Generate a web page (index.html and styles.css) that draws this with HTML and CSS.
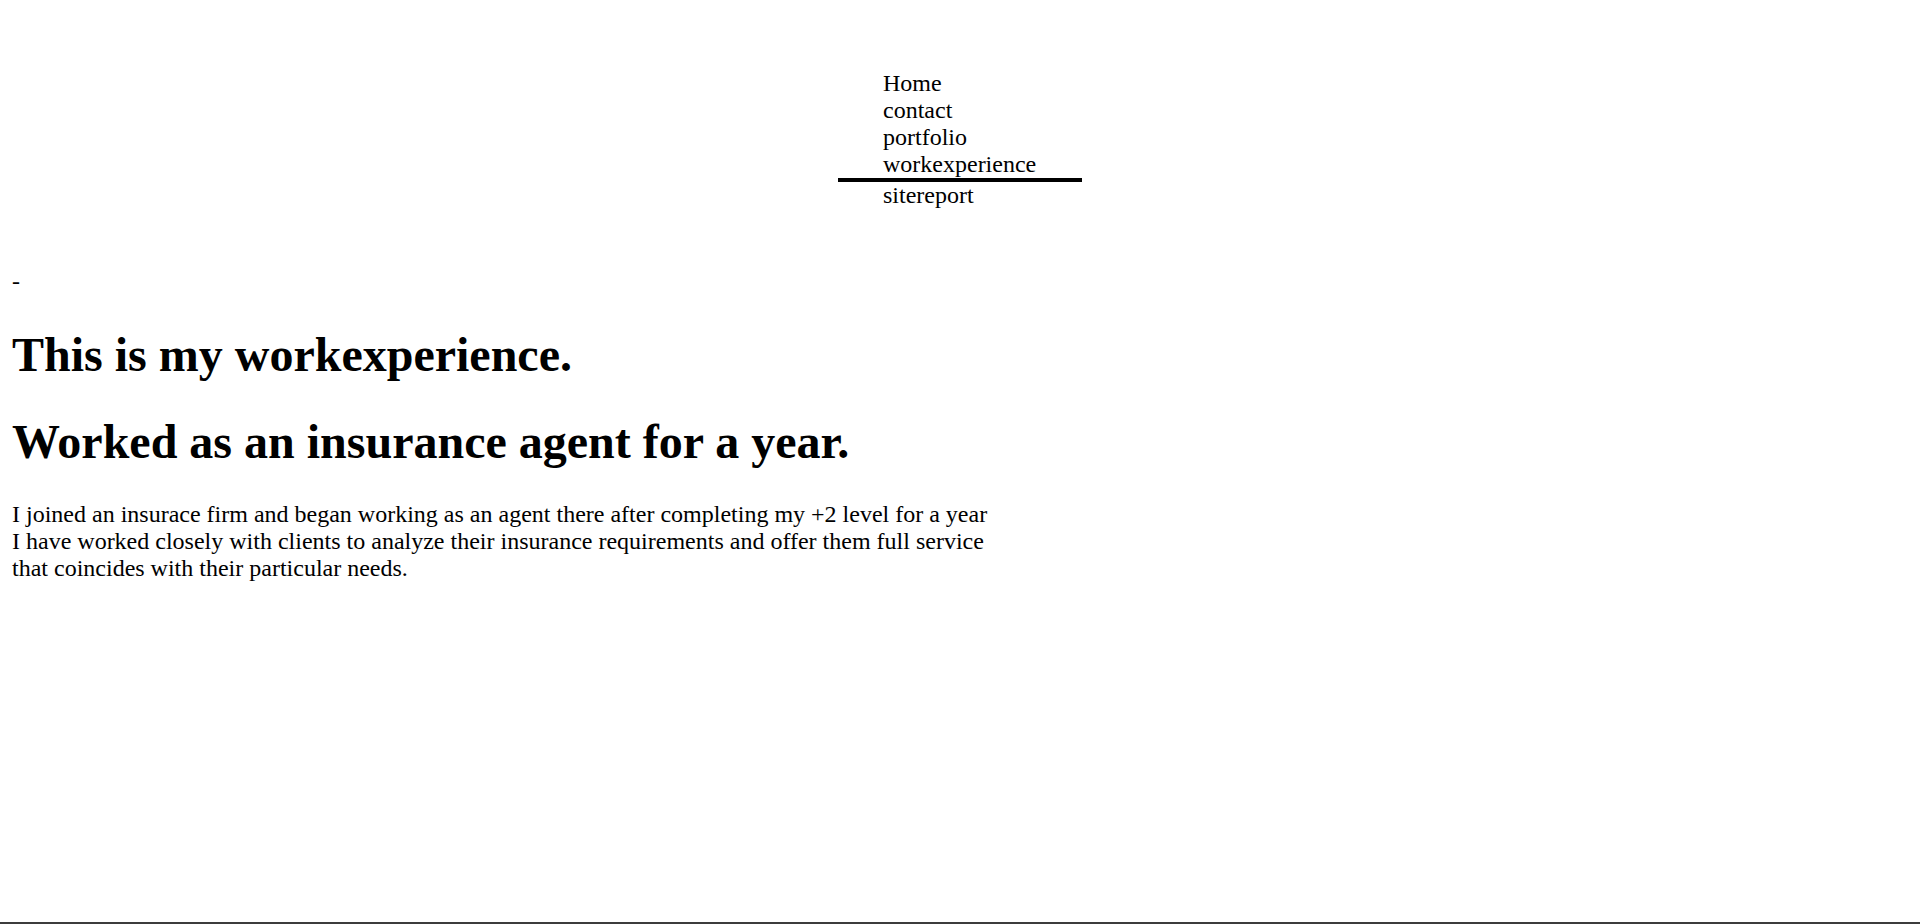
FILE: index.html
```html
<!DOCTYPE html>
<html lang="en">
<head>
<meta charset="utf-8">
<title>Work experience</title>
<link rel="stylesheet" href="styles.css">
</head>
<body>
<div class="page">
  <header class="site-header">
    <nav class="site-nav">
      <ul class="nav-list">
        <li class="nav-item"><a class="nav-link" href="#">Home</a></li>
        <li class="nav-item"><a class="nav-link" href="#">contact</a></li>
        <li class="nav-item"><a class="nav-link" href="#">portfolio</a></li>
        <li class="nav-item nav-item-active"><a class="nav-link" href="#">workexperience</a></li>
        <li class="nav-item"><a class="nav-link" href="#">sitereport</a></li>
      </ul>
    </nav>
  </header>
  <main class="content">
    <p class="dash">-</p>
    <h1 class="title">This is my workexperience.</h1>
    <h1 class="title">Worked as an insurance agent for a year.</h1>
    <p class="body-text">I joined an insurace firm and began working as an agent there after completing my +2 level for a year<br>I have worked closely with clients to analyze their insurance requirements and offer them full service that coincides with their particular needs.</p>
  </main>
  <footer class="bottom-bar"></footer>
</div>
</body>
</html>
```

FILE: styles.css
```css
html, body {
  margin: 0;
  padding: 0;
  background: #ffffff;
}

body {
  font-family: "Liberation Serif", "Times New Roman", serif;
  font-size: 24px;
  color: #000000;
}

.page {
  min-height: 100vh;
  display: flex;
  flex-direction: column;
  box-sizing: border-box;
}

.site-header {
  padding: 70px 12px 35px;
}

.site-nav {
  width: 244px;
  margin: 0 auto;
}

.nav-list {
  list-style: none;
  margin: 0;
  padding: 0;
}

.nav-item {
  padding-left: 45px;
}

.nav-item-active {
  border-bottom: 4px solid #000000;
}

.nav-link {
  color: #000000;
  text-decoration: none;
}

.content {
  padding: 0 12px;
}

.dash {
  margin: 24px 0;
}

.title {
  font-size: 48px;
  font-weight: bold;
  margin: 32px 0;
}

.body-text {
  margin: 32px 0 24px;
  max-width: 1000px;
}

.bottom-bar {
  margin-top: auto;
  height: 2px;
  background: #3c3c3c;
}
```
